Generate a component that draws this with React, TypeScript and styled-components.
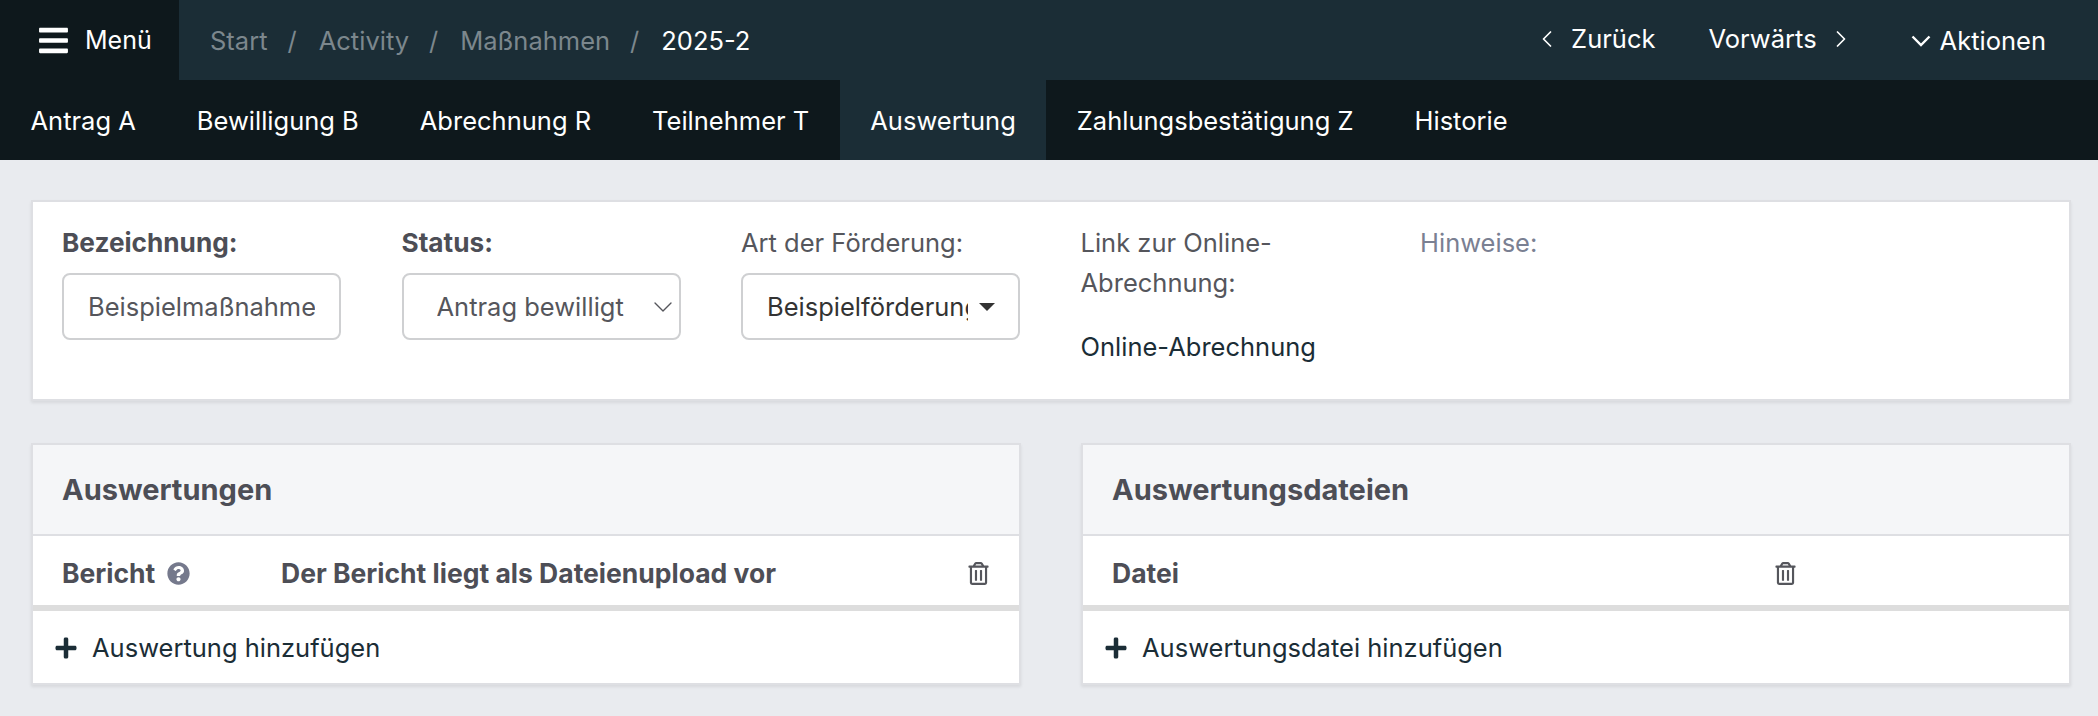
import React from 'react';
import styled, { createGlobalStyle } from 'styled-components';
import { ChevronDown, ChevronLeft, ChevronRight } from 'lucide-react';
import { FaBars, FaPlus, FaQuestionCircle, FaRegTrashAlt } from 'react-icons/fa';

const tabs = ['Antrag A', 'Bewilligung B', 'Abrechnung R', 'Teilnehmer T', 'Auswertung', 'Zahlungsbestätigung Z', 'Historie'];
const crumbs = ['Start', 'Activity', 'Maßnahmen'];

export default function App() {
    return (
        <Page>
            <GlobalStyle />
            <TopBar>
                <MenuButton>
                    <FaBars size={33} />
                    Menü
                </MenuButton>
                <Breadcrumb>
                    {crumbs.map((c) => (
                        <React.Fragment key={c}>
                            <Crumb>{c}</Crumb>
                            <Slash>/</Slash>
                        </React.Fragment>
                    ))}
                    <CurrentCrumb>2025-2</CurrentCrumb>
                </Breadcrumb>
                <Pager>
                    <PagerLink>
                        <ChevronLeft size={28} strokeWidth={1.5} />
                        Zurück
                    </PagerLink>
                    <PagerLink>
                        Vorwärts
                        <ChevronRight size={28} strokeWidth={1.5} />
                    </PagerLink>
                </Pager>
                <Actions>
                    <svg width="20" height="12" viewBox="0 0 20 12" fill="none" stroke="currentColor" strokeWidth="2.4">
                        <path d="M1.5 1.5 10 10 18.5 1.5" />
                    </svg>
                    Aktionen
                </Actions>
            </TopBar>
            <TabBar>
                {tabs.map((t) => (
                    <Tab key={t} $active={t === 'Auswertung'}>
                        {t}
                    </Tab>
                ))}
            </TabBar>
            <Content>
                <FormPanel>
                    <Field>
                        <Label $bold>Bezeichnung:</Label>
                        <TextInput readOnly value="Beispielmaßnahme" />
                    </Field>
                    <Field>
                        <Label $bold>Status:</Label>
                        <SelectBox>
                            <SelectText>Antrag bewilligt</SelectText>
                            <ChevronDown size={32} strokeWidth={1} />
                        </SelectBox>
                    </Field>
                    <Field>
                        <Label>Art der Förderung:</Label>
                        <DropdownBox>
                            <DropdownText>Beispielförderung</DropdownText>
                            <Caret />
                        </DropdownBox>
                    </Field>
                    <Field>
                        <Label>
                            Link zur Online-
                            <br />
                            Abrechnung:
                        </Label>
                        <OnlineLink>Online-Abrechnung</OnlineLink>
                    </Field>
                    <Field>
                        <HintLabel>Hinweise:</HintLabel>
                    </Field>
                </FormPanel>
                <Columns>
                    <Card>
                        <CardHeader>Auswertungen</CardHeader>
                        <ReportRow>
                            <RowLabel>
                                Bericht
                                <HelpIcon>
                                    <FaQuestionCircle size={23} />
                                </HelpIcon>
                            </RowLabel>
                            <RowLabel>Der Bericht liegt als Dateienupload vor</RowLabel>
                            <TrashIcon>
                                <FaRegTrashAlt size={23} />
                            </TrashIcon>
                        </ReportRow>
                        <AddRow>
                            <FaPlus size={24} />
                            Auswertung hinzufügen
                        </AddRow>
                    </Card>
                    <Card>
                        <CardHeader>Auswertungsdateien</CardHeader>
                        <FileRow>
                            <RowLabel>Datei</RowLabel>
                            <TrashIcon>
                                <FaRegTrashAlt size={23} />
                            </TrashIcon>
                        </FileRow>
                        <AddRow>
                            <FaPlus size={24} />
                            Auswertungsdatei hinzufügen
                        </AddRow>
                    </Card>
                </Columns>
            </Content>
        </Page>
    );
}

const GlobalStyle = createGlobalStyle`
    html, body {
        margin: 0;
        padding: 0;
        background: #e9ebef;
    }
    * {
        box-sizing: border-box;
    }
`;

const Page = styled.div`
    width: 2098px;
    height: 716px;
    overflow: hidden;
    background: #e9ebef;
    font-family: Inter, 'Liberation Sans', sans-serif;
    font-size: 25.5px;
    line-height: 40px;
    color: #1b2d36;
`;

const TopBar = styled.div`
    display: flex;
    align-items: center;
    height: 80px;
    background: #1b2d36;
    color: #fff;
`;

const MenuButton = styled.div`
    display: flex;
    align-items: center;
    gap: 15px;
    width: 179px;
    height: 100%;
    padding-left: 37px;
    background: #0e181c;
    font-size: 25px;
`;

const Breadcrumb = styled.div`
    display: flex;
    align-items: center;
    flex: 1;
    padding-left: 31px;
    padding-top: 2px;
`;

const Crumb = styled.span`
    color: #7c878d;
`;

const CurrentCrumb = styled.span`
    color: #fff;
`;

const Slash = styled.span`
    margin: 0 22px 0 20px;
    color: #7c878d;
`;

const Pager = styled.div`
    display: flex;
    align-items: center;
    gap: 53px;
    margin-right: 56px;
    padding-bottom: 2px;
`;

const PagerLink = styled.div`
    display: flex;
    align-items: center;
    gap: 10px;
`;

const Actions = styled.div`
    display: flex;
    align-items: center;
    gap: 9px;
    margin-right: 52px;
    padding-top: 2px;
`;

const TabBar = styled.div`
    display: flex;
    height: 80px;
    background: #0e181c;
`;

const Tab = styled.div<{ $active?: boolean }>`
    display: flex;
    align-items: center;
    padding: 2px 30.5px 0;
    color: #fff;
    background: ${(p) => (p.$active ? '#1b2d36' : 'transparent')};
`;

const Content = styled.div`
    display: flex;
    flex-direction: column;
    gap: 42px;
    padding: 40px 27px 0 31px;
`;

const panelEdge = `
    border: 2px solid #dedfe3;
    box-shadow: 0 2px 3px rgba(0, 0, 0, 0.08);
`;

const FormPanel = styled.div`
    ${panelEdge}
    display: grid;
    grid-template-columns: repeat(5, 279px);
    column-gap: 60.5px;
    height: 201px;
    padding: 21px 29px 0;
    background: #fff;
`;

const Field = styled.div`
    display: flex;
    flex-direction: column;
    align-items: stretch;
`;

const Label = styled.div<{ $bold?: boolean }>`
    color: ${(p) => (p.$bold ? '#4d4e56' : '#55565c')};
    font-size: ${(p) => (p.$bold ? '26.2px' : '25.5px')};
    font-weight: ${(p) => (p.$bold ? 700 : 400)};
`;

const HintLabel = styled.div`
    color: #7a8092;
`;

const controlBox = `
    display: flex;
    align-items: center;
    height: 67px;
    margin-top: 10px;
    border: 2px solid #cfd0d2;
    border-radius: 8px;
    background: #fff;
    font-family: Inter, 'Liberation Sans', sans-serif;
    font-size: 25.5px;
`;

const TextInput = styled.input`
    ${controlBox}
    width: 100%;
    padding: 0 24px;
    color: #55565c;
    outline: none;
`;

const SelectBox = styled.div`
    ${controlBox}
    justify-content: space-between;
    padding: 0 0 0 33px;
    color: #55565c;
    svg {
        flex: none;
    }
`;

const SelectText = styled.span`
    overflow: hidden;
    white-space: nowrap;
`;

const DropdownBox = styled.div`
    ${controlBox}
    padding: 0 23px 0 24px;
    color: #333;
`;

const DropdownText = styled.span`
    overflow: hidden;
    flex: 1;
    white-space: nowrap;
`;

const Caret = styled.span`
    flex: none;
    margin-left: 11px;
    border-top: 8px solid #333;
    border-left: 8px solid transparent;
    border-right: 8px solid transparent;
`;

const OnlineLink = styled.div`
    margin-top: 24px;
    color: #1b2d36;
`;

const Columns = styled.div`
    display: grid;
    grid-template-columns: 990px 990px;
    column-gap: 60px;
`;

const Card = styled.div`
    ${panelEdge}
    background: #fff;
`;

const CardHeader = styled.div`
    display: flex;
    align-items: center;
    height: 91px;
    padding-left: 29px;
    background: #f5f6f8;
    border-bottom: 2px solid #dedfe3;
    color: #4d4e56;
    font-size: 29px;
    font-weight: 700;
`;

const rowBase = `
    display: grid;
    align-items: center;
    height: 75px;
    padding: 5px 0 0 29px;
    border-bottom: 6px solid #dddddd;
`;

const ReportRow = styled.div`
    ${rowBase}
    grid-template-columns: 219px 686px 60px;
`;

const FileRow = styled.div`
    ${rowBase}
    grid-template-columns: 662px 60px;
`;

const RowLabel = styled.div`
    display: flex;
    align-items: center;
    color: #4d4e56;
    font-size: 26.5px;
    font-weight: 700;
`;

const HelpIcon = styled.span`
    display: flex;
    margin-left: 12px;
    color: #75798c;
`;

const TrashIcon = styled.span`
    display: flex;
    color: #55565c;
`;

const AddRow = styled.div`
    display: flex;
    align-items: center;
    gap: 14px;
    height: 72px;
    padding: 2px 0 0 21px;
    color: #1b2d36;
`;
